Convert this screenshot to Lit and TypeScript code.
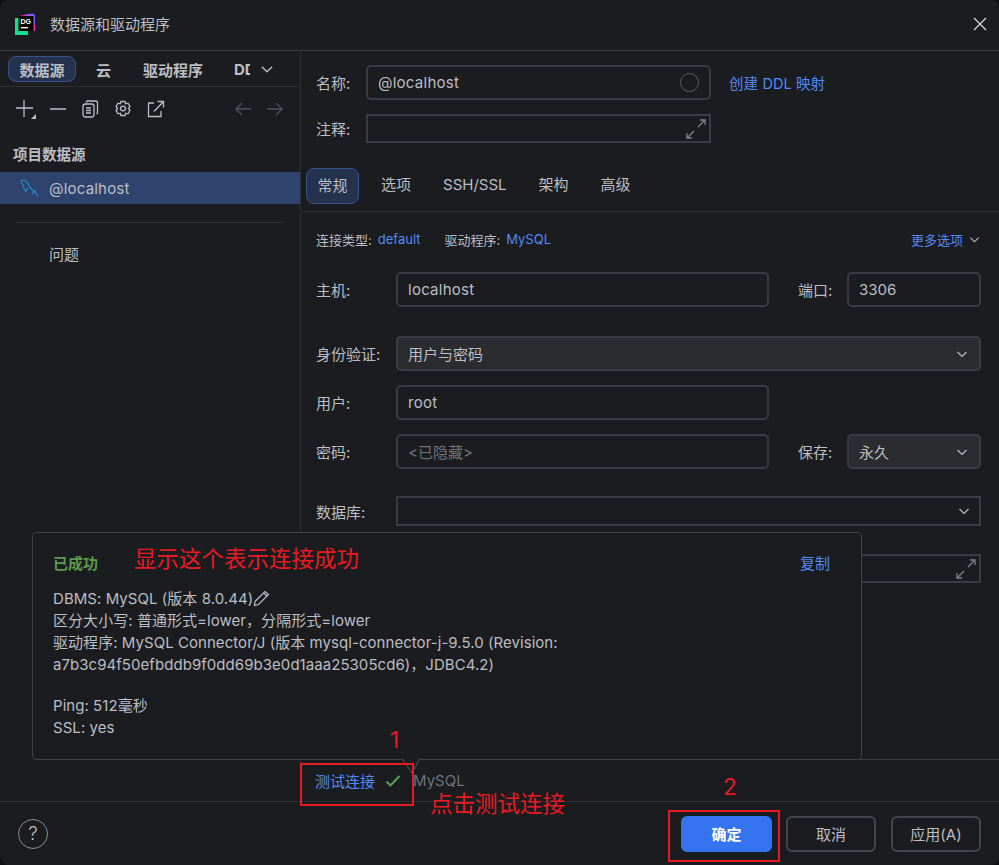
import { LitElement, html, css, svg } from 'lit';
import { customElement } from 'lit/decorators.js';

const chevron = (size = 14) => html`<svg class="chev" width=${size} height=${size} viewBox="0 0 14 14" fill="none" stroke="currentColor" stroke-width="1.2"><path d="M2.5 5l4.5 4.5L11.5 5" /></svg>`;

const expand = html`<svg width="22" height="22" viewBox="0 0 22 22" fill="none" stroke="#7f8288" stroke-width="1.3"><path d="M13 9l7-7M15 2h5v5M2 20l7-7M2 15v5h5" /></svg>`;

const logo = svg`<svg width="22" height="22" viewBox="0 0 22 22">
  <path d="M5 3l8-2 7 1v16H5z" fill="#f02fc2" />
  <path d="M11 1.500l7-1 2 2v9z" fill="#7a5cff" />
  <path d="M0 5h7v17H0z" fill="#12e08a" />
  <path d="M0 17h13v5H0z" fill="#12e08a" />
  <rect x="3.500" y="3" width="15" height="15" fill="#000" />
  <rect x="6" y="14" width="7" height="1.400" fill="#fff" />
  <text x="5.500" y="11" font-size="7" font-weight="700" fill="#fff" font-family="Liberation Sans, sans-serif">DG</text>
</svg>`;

@customElement('app-root')
export class AppRoot extends LitElement {
  static styles = css`
    :host {
      display: block;
      width: 999px;
      height: 865px;
      background: #0d0e10;
      font-family: 'Inter', 'Noto Sans CJK SC', sans-serif;
      font-size: 15px;
      color: #bcbec4;
    }

    .window {
      position: relative;
      width: 999px;
      height: 865px;
      box-sizing: border-box;
      border-radius: 8px;
      background: #1a1c1f;
      display: flex;
      flex-direction: column;
      overflow: hidden;
    }

    .titlebar {
      height: 51px;
      flex: none;
      display: flex;
      align-items: center;
      gap: 13px;
      padding: 0 11px 3px 15px;
      box-sizing: border-box;
      border-bottom: 1px solid #3b3d42;
    }
    .titlebar .grow { flex: 1; }

    .main { flex: 1; display: flex; min-height: 0; }

    .side {
      width: 300px;
      flex: none;
      border-right: 1px solid #2b2d30;
      display: flex;
      flex-direction: column;
    }

    .side-tabs {
      height: 36px;
      flex: none;
      box-sizing: border-box;
      display: flex;
      align-items: center;
      padding: 1px 0 0 8px;
      border-bottom: 1px solid #2b2d30;
      font-weight: 700;
      color: #bcbec4;
    }
    .side-tabs .pill {
      width: 68px;
      height: 26px;
      box-sizing: border-box;
      display: flex;
      align-items: center;
      justify-content: center;
      background: #25324d;
      border: 1px solid #35538f;
      border-radius: 8px;
    }
    .side-tabs .cloud { margin-left: 20px; }
    .side-tabs .drivers { margin-left: 32px; }
    .side-tabs .ddl {
      margin-left: 31px;
      width: 16px;
      overflow: hidden;
      white-space: nowrap;
    }
    .side-tabs .chev { margin-left: 9px; }

    .tools {
      height: 44px;
      flex: none;
      display: flex;
      align-items: center;
      padding-left: 14px;
      gap: 15px;
      color: #bcbec4;
    }
    .tools svg { flex: none; }
    .tools .minus { margin-left: -2px; }
    .tools .copy { margin-left: -1px; }
    .tools .grow { flex: 1; }
    .tools .nav { gap: 14px; display: flex; padding-right: 16px; color: #4e5157; }

    .section {
      margin: 15px 0 0 13px;
      height: 20px;
      line-height: 18px;
      font-size: 14.500px;
      font-weight: 700;
      color: #bcbec4;
    }

    .selected {
      margin-top: 6px;
      height: 32px;
      flex: none;
      display: flex;
      align-items: center;
      gap: 10px;
      padding-left: 20px;
      background: #2e436e;
      letter-spacing: 0.2px;
    }

    .rule {
      height: 1px;
      margin: 18px 16px 0 16px;
      background: #2b2d30;
    }

    .problem { margin: 22px 0 0 49px; line-height: 20px; }

    .content {
      flex: 1;
      min-width: 0;
      display: flex;
      flex-direction: column;
    }

    .head {
      padding: 14px 18px 0 15px;
      display: grid;
      grid-template-columns: 50px 345px auto;
      row-gap: 14px;
      align-items: center;
    }

    .field {
      box-sizing: border-box;
      height: 35px;
      display: flex;
      align-items: center;
      justify-content: space-between;
      padding: 0 10px;
      border: 2px solid #3a3c41;
      border-radius: 5px;
      color: #bcbec4;
      white-space: nowrap;
    }
    .field.latin { letter-spacing: 0.25px; }
    .field.flat {
      border-radius: 0;
      height: 29px;
      padding: 0 2px 0 0;
      justify-content: flex-end;
    }
    .field.select { background: #2a2c30; }
    .field.muted { color: #6f737a; }
    .field .chev { color: #bcbec4; margin-right: 0; }

    .ring {
      width: 17px;
      height: 17px;
      border: 1.500px solid #5a5d63;
      border-radius: 50%;
    }

    .link { color: #548af7; }
    .ddl-link { margin-left: 18px; font-size: 14.500px; letter-spacing: 0.1px; }

    .tabs {
      margin-top: 25px;
      height: 44px;
      box-sizing: border-box;
      display: flex;
      align-items: flex-start;
      padding-left: 5px;
      gap: 32px;
      border-bottom: 1px solid #2b2d30;
    }
    .tabs span { height: 36px; line-height: 34px; }
    .tabs .active {
      width: 53px;
      box-sizing: border-box;
      text-align: center;
      background: #25324d;
      border: 1px solid #35538f;
      border-radius: 8px;
      margin-right: -10px;
    }

    .meta {
      margin-top: 17px;
      height: 20px;
      padding: 0 18px 0 15px;
      display: flex;
      align-items: center;
      font-size: 13px;
    }
    .meta .link { margin-left: 6px; }
    .meta .driver { margin-left: 24px; }
    .meta .grow { flex: 1; }
    .meta .chev { margin-left: 5px; color: #bcbec4; }

    .form {
      padding: 23px 18px 0 15px;
      display: grid;
      grid-template-columns: 80px 373px 78px 134px;
      align-items: center;
    }
    .form .wide { grid-column: 2 / 5; }
    .form .lbl2 { padding-left: 29px; }
    .gap29 { margin-top: 29px; }
    .gap14 { margin-top: 14px; }

    .db-row { margin-top: 27px; }
    .db-row.field { height: 30px; padding-right: 8px; }
    .url-row { margin-top: 28px; }

    .spacer { flex: 1; }

    .driver-row {
      height: 42px;
      flex: none;
      box-sizing: border-box;
      display: flex;
      align-items: center;
      padding-left: 14px;
      border-top: 1px solid #3b3d42;
      color: #6f737a;
    }
    .driver-row svg { margin-left: 10px; }
    .driver-row .name { margin-left: 12px; }

    .footer {
      height: 64px;
      flex: none;
      box-sizing: border-box;
      display: flex;
      align-items: center;
      padding: 0 18px 0 18px;
      border-top: 1px solid #2b2d30;
    }
    .footer .grow { flex: 1; }
    .help {
      width: 30px;
      height: 30px;
      box-sizing: border-box;
      border: 1.500px solid #8b8e94;
      border-radius: 50%;
      display: flex;
      align-items: center;
      justify-content: center;
      font-size: 19px;
      font-weight: 300;
    }
    .btn {
      box-sizing: border-box;
      height: 36px;
      display: flex;
      align-items: center;
      justify-content: center;
      border: 2px solid #43454a;
      border-radius: 6px;
      width: 90px;
      margin-left: 15px;
    }
    .btn.primary {
      width: 91px;
      margin-left: 0;
      margin-right: -1px;
      background: #3574f0;
      border-color: #3574f0;
      color: #fff;
      font-weight: 700;
    }

    /* popup that sits over the form */
    .popup {
      position: absolute;
      left: 32px;
      top: 532px;
      width: 830px;
      height: 228px;
      box-sizing: border-box;
      padding: 19px 20px 0 20px;
      background: #1a1c1f;
      border: 1.500px solid #3f4146;
      border-radius: 4px;
    }
    .popup .top {
      display: flex;
      justify-content: space-between;
      height: 20px;
      align-items: center;
      padding-right: 11px;
    }
    .popup .ok { color: #5c9a50; font-weight: 700; }
    .popup .body {
      margin-top: 16px;
      line-height: 22px;
      white-space: pre-wrap;
      letter-spacing: 0.05px;
    }
    .popup .body .blank { height: 19px; }
    .popup .body svg { vertical-align: -3px; }
    .arrow {
      position: absolute;
      left: 402px;
      top: 758px;
      width: 19px;
      height: 16px;
    }

    /* red annotations drawn on the screenshot */
    .note {
      position: absolute;
      color: #e81b23;
      font-size: 22.500px;
      line-height: 28px;
      white-space: nowrap;
    }
    .box {
      position: absolute;
      box-sizing: border-box;
      border: 2px solid #e81b23;
    }
  `;

  render(): unknown {
    return html`
      <div class="window">
        <div class="titlebar">
          ${logo}
          <span>数据源和驱动程序</span>
          <span class="grow"></span>
          <svg width="16" height="16" viewBox="0 0 16 16" stroke="#d5d7db" stroke-width="1.3"><path d="M2 2l12 12M14 2L2 14" /></svg>
        </div>

        <div class="main">
          <div class="side">
            <div class="side-tabs">
              <span class="pill">数据源</span>
              <span class="cloud">云</span>
              <span class="drivers">驱动程序</span>
              <span class="ddl">DDL</span>
              ${chevron(16)}
            </div>
            <div class="tools">
              <svg width="22" height="22" viewBox="0 0 22 22" fill="none" stroke="currentColor" stroke-width="1.3"><path d="M10 2v17M2 10h17" /><path d="M17 21h5v-5z" fill="#bcbec4" stroke="none" /></svg>
              <svg class="minus" width="18" height="18" viewBox="0 0 18 18" stroke="currentColor" stroke-width="1.3"><path d="M1 9h16" /></svg>
              <svg class="copy" width="18" height="18" viewBox="0 0 18 18" fill="none" stroke="currentColor" stroke-width="1.3"><rect x="2" y="4" width="11" height="13" rx="2.500" /><path d="M5 2.500 6 1h8.500Q16.500 1 16.500 3v10L15.500 14M5 8h5M5 10.500h5M5 13h5" /></svg>
              <svg width="18" height="18" viewBox="0 0 18 18" fill="none" stroke="currentColor" stroke-width="1.3"><path d="M7 1.500h4l.7 2.300 2.300-.6 2 3.400-1.700 1.900 1.700 1.900-2 3.400-2.300-.6-.7 2.300H7l-.7-2.300-2.300.6-2-3.400L3.700 8.500 2 6.600l2-3.400 2.300.6z" /><circle cx="9" cy="8.500" r="2.400" /></svg>
              <svg width="18" height="18" viewBox="0 0 18 18" fill="none" stroke="currentColor" stroke-width="1.3"><path d="M7 3H1.500v13.500H14V11M7 11.500L16 2M10.500 1.500h6v6" /></svg>
              <span class="grow"></span>
              <span class="nav">
                <svg width="18" height="18" viewBox="0 0 18 18" fill="none" stroke="currentColor" stroke-width="1.3"><path d="M17 9H2M8 3L2 9l6 6" /></svg>
                <svg width="18" height="18" viewBox="0 0 18 18" fill="none" stroke="currentColor" stroke-width="1.3"><path d="M1 9h15M10 3l6 6-6 6" /></svg>
              </span>
            </div>
            <div class="section">项目数据源</div>
            <div class="selected">
              <svg width="19" height="19" viewBox="0 0 19 19" fill="none" stroke="#1a94d2" stroke-width="1.100"><path d="M1 1.500c3.500-1 5.500.5 7 3.500 1.500 3.500 4 6 7 7.500l3 5M1 1.500c0 2 1 3.500 2 4.500.5 2.500 1.500 5 3 6.500M6 12.500c1-1 1.300-2 1-3.500M15 12.500c-1.500 0-2.500 1-2 3" /></svg>
              <span>@localhost</span>
            </div>
            <div class="rule"></div>
            <div class="problem">问题</div>
          </div>

          <div class="content">
            <div class="head">
              <span>名称:</span>
              <div class="field latin"><span>@localhost</span><span class="ring"></span></div>
              <span class="link ddl-link">创建 DDL 映射</span>
              <span>注释:</span>
              <div class="field flat">${expand}</div>
            </div>

            <div class="tabs">
              <span class="active">常规</span>
              <span>选项</span>
              <span>SSH/SSL</span>
              <span>架构</span>
              <span>高级</span>
            </div>

            <div class="meta">
              <span>连接类型:</span><span class="link">default</span>
              <span class="driver">驱动程序:</span><span class="link">MySQL</span>
              <span class="grow"></span>
              <span class="link">更多选项</span>${chevron(13)}
            </div>

            <div class="form">
              <span>主机:</span>
              <div class="field latin">localhost</div>
              <span class="lbl2">端口:</span>
              <div class="field">3306</div>

              <span class="gap29">身份验证:</span>
              <div class="field select wide gap29"><span>用户与密码</span>${chevron()}</div>

              <span class="gap14">用户:</span>
              <div class="field latin gap14">root</div>
              <span></span><span></span>

              <span class="gap14">密码:</span>
              <div class="field muted gap14">&lt;已隐藏&gt;</div>
              <span class="lbl2 gap14">保存:</span>
              <div class="field select gap14"><span>永久</span>${chevron()}</div>

              <span class="db-row">数据库:</span>
              <div class="field flat wide db-row">${chevron()}</div>

              <span class="url-row"></span>
              <div class="field flat wide url-row">${expand}</div>
            </div>

            <div class="spacer"></div>

            <div class="driver-row">
              <span class="link">测试连接</span>
              <svg width="16" height="16" viewBox="0 0 16 16" fill="none" stroke="#5c9a50" stroke-width="2.200"><path d="M1.500 8.500l4 4 9-9.500" /></svg>
              <span class="name">MySQL</span>
            </div>
          </div>
        </div>

        <div class="footer">
          <div class="help">?</div>
          <span class="grow"></span>
          <div class="btn primary">确定</div>
          <div class="btn">取消</div>
          <div class="btn">应用(A)</div>
        </div>

        <div class="popup">
          <div class="top">
            <span class="ok">已成功</span>
            <span class="link">复制</span>
          </div>
          <div class="body"><div>DBMS: MySQL (版本 8.0.44)<svg width="18" height="18" viewBox="0 0 18 18" fill="none" stroke="#bcbec4" stroke-width="1.2"><path d="M2 12.500L12 2.500l3.500 3L5.500 15.500 1.500 16.500zM10.500 4l3.500 3" /></svg></div><div>区分大小写: 普通形式=lower，分隔形式=lower</div><div>驱动程序: MySQL Connector/J (版本 mysql-connector-j-9.5.0 (Revision:</div><div>a7b3c94f50efbddb9f0dd69b3e0d1aaa25305cd6)，JDBC4.2)</div><div class="blank"></div><div>Ping: 512毫秒</div><div>SSL: yes</div></div>
        </div>
        <svg class="arrow" viewBox="0 0 19 16" fill="#1a1c1f" stroke="#3f4146" stroke-width="1.500"><path d="M0 .500L10 15 18 .500" /></svg>

        <span class="note" style="left:134px;top:545px">显示这个表示连接成功</span>
        <span class="note" style="left:390px;top:726px">1</span>
        <span class="note" style="left:723px;top:773px">2</span>
        <span class="note" style="left:430px;top:790px">点击测试连接</span>
        <div class="box" style="left:300px;top:763px;width:114px;height:43px"></div>
        <div class="box" style="left:668px;top:810px;width:112px;height:52px"></div>
      </div>
    `;
  }
}

declare global {
  interface HTMLElementTagNameMap {
    'app-root': AppRoot;
  }
}
